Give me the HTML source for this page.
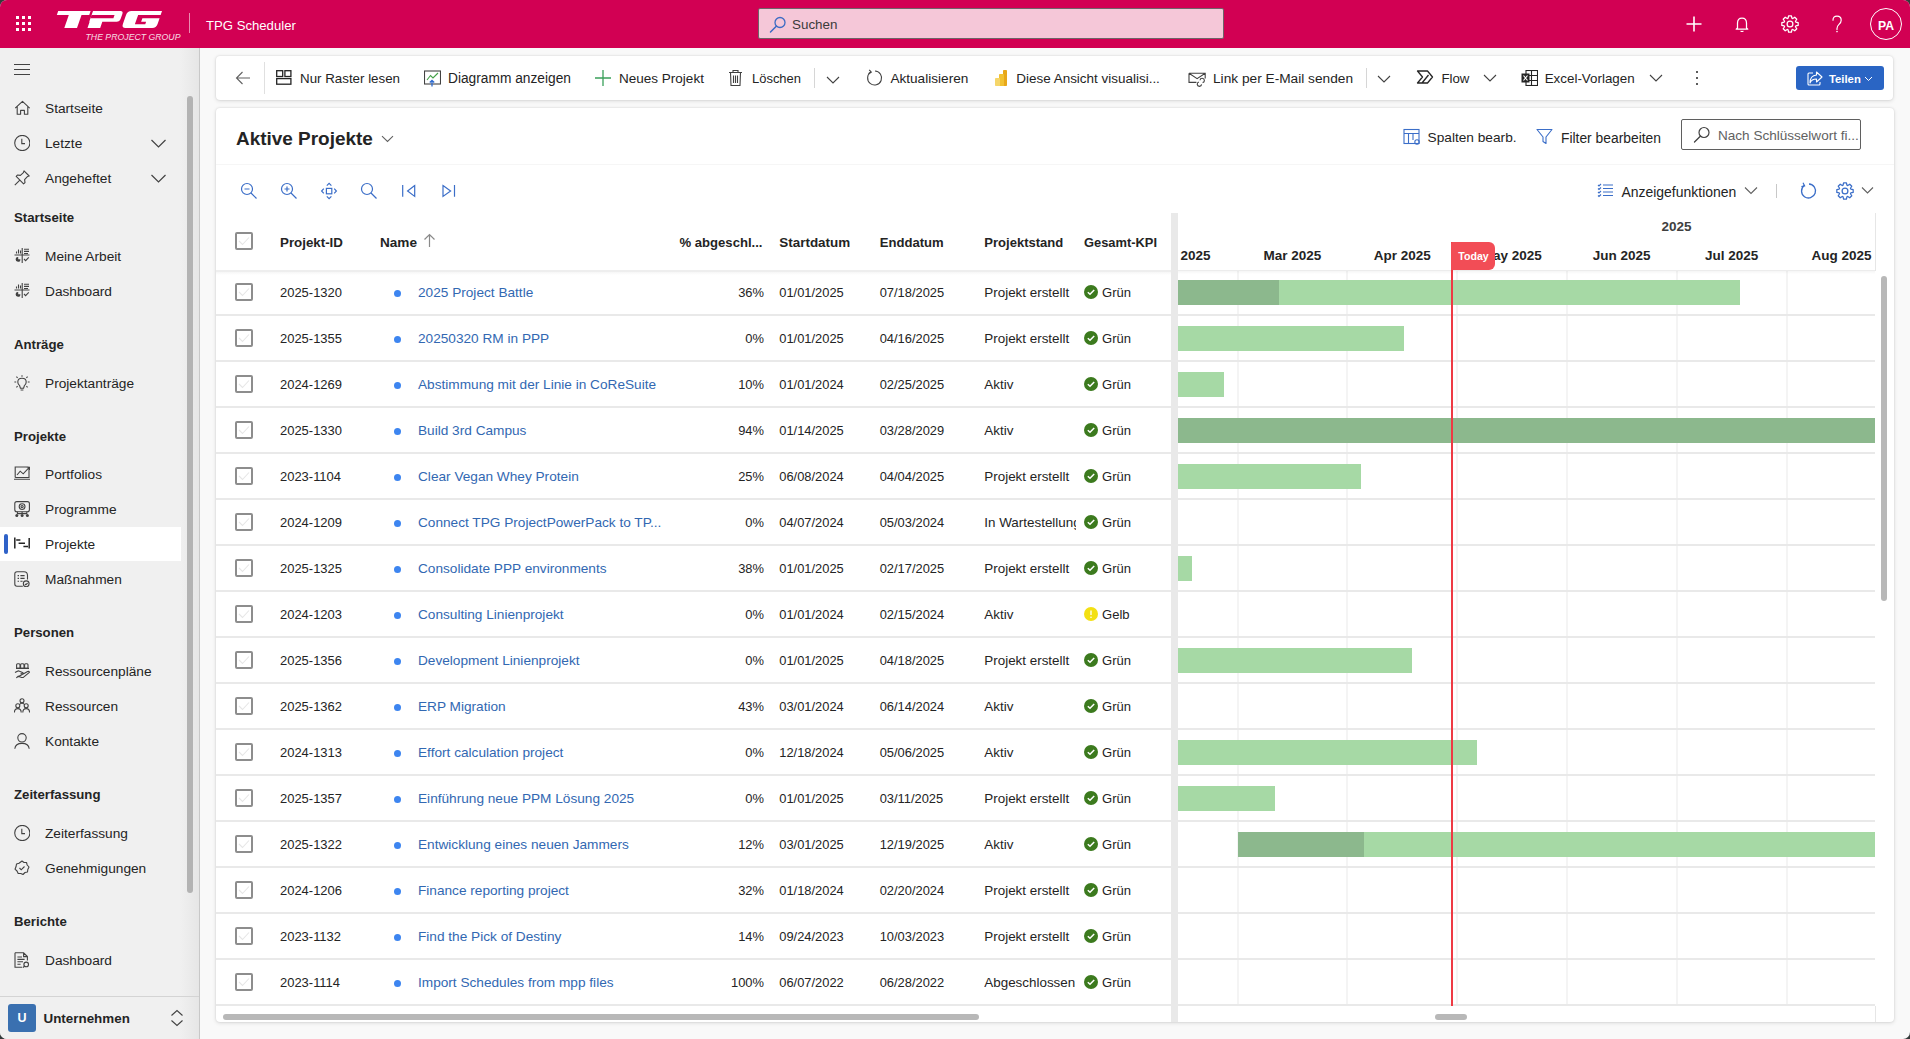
<!DOCTYPE html>
<html><head><meta charset="utf-8"><title>TPG Scheduler</title>
<style>
html,body{margin:0;padding:0;width:1910px;height:1039px;overflow:hidden;background:#343b3b}
#app{position:absolute;left:0;top:0;width:1910px;height:1039px;border-radius:7px;overflow:hidden;background:#f9f9f9;font-family:"Liberation Sans",sans-serif}
.a{position:absolute}
.t{position:absolute;white-space:nowrap;line-height:20px;font-family:"Liberation Sans",sans-serif}
.card{background:#fff;border-radius:4px;box-shadow:0 0 2px rgba(0,0,0,0.12),0 1px 4px rgba(0,0,0,0.12)}
</style></head><body><div id="app">
<div class="a" style="left:0;top:0;width:1910px;height:48px;background:#d20053"></div>
<div class="a" style="left:16px;top:16px;width:3px;height:3px;background:#fff"></div>
<div class="a" style="left:16px;top:22px;width:3px;height:3px;background:#fff"></div>
<div class="a" style="left:16px;top:28px;width:3px;height:3px;background:#fff"></div>
<div class="a" style="left:22px;top:16px;width:3px;height:3px;background:#fff"></div>
<div class="a" style="left:22px;top:22px;width:3px;height:3px;background:#fff"></div>
<div class="a" style="left:22px;top:28px;width:3px;height:3px;background:#fff"></div>
<div class="a" style="left:28px;top:16px;width:3px;height:3px;background:#fff"></div>
<div class="a" style="left:28px;top:22px;width:3px;height:3px;background:#fff"></div>
<div class="a" style="left:28px;top:28px;width:3px;height:3px;background:#fff"></div>
<svg class="a" style="left:0;top:0" width="200" height="48" viewBox="0 0 200 48">
<g fill="#fff" transform="translate(9.765,0) skewX(-19.29)">
<rect x="52.3" y="11" width="32.4" height="3.95"/>
<rect x="64.3" y="14" width="12.7" height="13.9"/>
<path d="M87.1 11 H114.5 Q117.5 11 117.5 14 V18.85 Q117.5 21.85 114.5 21.85 H100.2 V27.9 H87.5 V21.85 H87.1 Z"/>
<path d="M125.5 11 H156.1 V14.9 H133.6 V24.3 H144 V21.85 H139 V18.2 H156.2 V23.9 Q156.2 27.9 152.2 27.9 H125.5 Q121.5 27.9 121.5 23.9 V15 Q121.5 11 125.5 11 Z"/>
</g>
<g fill="#d20053" transform="translate(9.765,0) skewX(-19.29)">
<rect x="87" y="14.9" width="23" height="3.3"/>
</g>
<text x="85.5" y="39.6" font-family="Liberation Sans" font-size="8.6" font-style="italic" fill="#fff" opacity="0.85" textLength="95" lengthAdjust="spacingAndGlyphs">THE PROJECT GROUP</text>
<rect x="189" y="13" width="1" height="20" fill="#fff" opacity="0.55"/>
</svg>
<div class="t" style="left:206px;top:15.5px;font-size:13.15px;font-weight:400;color:#fff;">TPG Scheduler</div>
<div class="a" style="left:758px;top:8px;width:464px;height:29px;background:#f5c7d8;border:1px solid #6f6368;border-radius:2px"></div>
<svg class="a" style="left:769px;top:16px;color:#424242" width="18" height="18" viewBox="0 0 18 18" ><circle cx="11" cy="6.5" r="5" fill="none" stroke="#3c6bc4" stroke-width="1.3"/><path d="M7.3 10.2 L1.5 16" stroke="#3c6bc4" stroke-width="1.5" stroke-linecap="round"/></svg>
<div class="t" style="left:792px;top:15.0px;font-size:13.4px;font-weight:400;color:#3b3b3b;">Suchen</div>
<svg class="a" style="left:1685px;top:15px;color:#424242" width="18" height="18" viewBox="0 0 18 18" ><path d="M9 1.5 V16.5 M1.5 9 H16.5" stroke="#fff" stroke-width="1.6"/></svg>
<svg class="a" style="left:1735px;top:16px;color:#424242" width="14" height="17" viewBox="0 0 14 17" ><path d="M2.5 12 V7 Q2.5 2 7 2 Q11.5 2 11.5 7 V12 L12.8 13.2 H1.2 Z" fill="none" stroke="#fff" stroke-width="1.25" stroke-linejoin="round"/><path d="M5.6 14.8 Q7 16.2 8.4 14.8" fill="none" stroke="#fff" stroke-width="1.2"/></svg>
<svg class="a" style="left:1781px;top:15px;color:#424242" width="18" height="18" viewBox="0 0 18 18" ><polygon points="14.80,7.11 17.17,7.56 17.17,10.44 14.80,10.89 14.44,11.77 15.80,13.76 13.76,15.80 11.77,14.44 10.89,14.80 10.44,17.17 7.56,17.17 7.11,14.80 6.23,14.44 4.24,15.80 2.20,13.76 3.56,11.77 3.20,10.89 0.83,10.44 0.83,7.56 3.20,7.11 3.56,6.23 2.20,4.24 4.24,2.20 6.23,3.56 7.11,3.20 7.56,0.83 10.44,0.83 10.89,3.20 11.77,3.56 13.76,2.20 15.80,4.24 14.44,6.23" fill="none" stroke="#fff" stroke-width="1.25" stroke-linejoin="round"/><circle cx="9" cy="9" r="2.9" fill="none" stroke="#fff" stroke-width="1.25"/></svg>
<svg class="a" style="left:1831px;top:15px;color:#424242" width="13" height="18" viewBox="0 0 13 18" ><path d="M2 5.2 Q2 1.2 6 1.2 Q10.2 1.2 10.2 5.2 Q10.2 7.6 7.8 9.6 Q6 11.2 6 13.6 V14.4" stroke="#fff" fill="none" stroke-width="1.2" stroke-linecap="round"/><circle cx="6" cy="16.6" r="0.8" fill="#fff"/></svg>
<div class="a" style="left:1870px;top:8px;width:30px;height:30px;border:1px solid #fff;border-radius:50%"></div>
<div class="t" style="left:1686px;width:400px;text-align:center;top:16.0px;font-size:12.2px;font-weight:700;color:#fff;">PA</div>
<div class="a" style="left:0;top:48px;width:199px;height:991px;background:linear-gradient(to right,#f0f0f0 0,#f0f0f0 180px,#e6e6e6 199px)"></div>
<div class="a" style="left:199px;top:48px;width:1px;height:991px;background:#c8c8c8"></div>
<div class="a" style="left:14px;top:64px;width:16px;height:1px;background:#424242"></div>
<div class="a" style="left:14px;top:69px;width:16px;height:1px;background:#424242"></div>
<div class="a" style="left:14px;top:74px;width:16px;height:1px;background:#424242"></div>
<div class="a" style="left:0;top:527px;width:181px;height:34px;background:#fff"></div>
<div class="a" style="left:4px;top:534px;width:4px;height:20px;background:#2f62c8;border-radius:2px"></div>
<div class="a" style="left:187px;top:96px;width:6px;height:797px;background:#b3b3b3;border-radius:3px"></div>
<svg class="a" style="left:14px;top:100px;color:#424242" width="16" height="16" viewBox="0 0 16 16" ><path d="M1.2 8.2 L8.5 1.3 L15.8 8.2 M3.2 6.5 V14.2 H6.6 V10.4 H10.4 V14.2 H13.8 V6.5" stroke="#424242" fill="none" stroke-width="1.1" stroke-linejoin="round"/></svg>
<div class="t" style="left:45px;top:99.0px;font-size:13.7px;font-weight:400;color:#242424;">Startseite</div>
<svg class="a" style="left:14px;top:135px;color:#424242" width="16" height="16" viewBox="0 0 16 16" ><circle cx="8.3" cy="8" r="7.6" stroke="#424242" fill="none" stroke-width="1.1"/><path d="M7.8 3.8 V8.6 H11" stroke="#424242" fill="none" stroke-width="1.1" stroke-width="1.3"/></svg>
<div class="t" style="left:45px;top:134.0px;font-size:13.7px;font-weight:400;color:#242424;">Letzte</div>
<svg class="a" style="left:150px;top:137px;color:#424242" width="17" height="12" viewBox="0 0 17 12" ><path d="M1.5 3 L8.5 10 L15.5 3" stroke="#424242" fill="none" stroke-width="1.2"/></svg>
<svg class="a" style="left:14px;top:170px;color:#424242" width="16" height="16" viewBox="0 0 16 16" ><path d="M10 0.8 L15.2 6 L13.4 6.6 L10.6 9.6 L11 12.6 L9.6 13.8 L2.2 6.4 L3.4 5 L6.4 5.4 L9.4 2.6 Z M5.6 10.4 L0.8 15.2" stroke="#424242" fill="none" stroke-width="1.1" stroke-linejoin="round"/></svg>
<div class="t" style="left:45px;top:169.0px;font-size:13.7px;font-weight:400;color:#242424;">Angeheftet</div>
<svg class="a" style="left:150px;top:172px;color:#424242" width="17" height="12" viewBox="0 0 17 12" ><path d="M1.5 3 L8.5 10 L15.5 3" stroke="#424242" fill="none" stroke-width="1.2"/></svg>
<div class="t" style="left:14px;top:208.0px;font-size:13.2px;font-weight:700;color:#242424;">Startseite</div>
<svg class="a" style="left:14px;top:248px;color:#424242" width="16" height="16" viewBox="0 0 16 16" ><path d="M8.2 0 V15 M0.5 7 H15.5 M2.5 5.5 V3.5 M4.5 5.5 V1.5 M6.5 5.5 V2.5 M10 1.2 H15 M10 3.4 H15 M10 5.5 H14" stroke="#424242" fill="none" stroke-width="1.1"/><path d="M10 11 L11.6 12.6 L14.8 9.4" stroke="#424242" fill="none" stroke-width="1.1" stroke-width="1.3"/><path d="M4.2 9 A2.4 2.4 0 1 0 6.4 11.2 H4.2 Z" fill="#424242"/></svg>
<div class="t" style="left:45px;top:247.0px;font-size:13.7px;font-weight:400;color:#242424;">Meine Arbeit</div>
<svg class="a" style="left:14px;top:283px;color:#424242" width="16" height="16" viewBox="0 0 16 16" ><path d="M8.2 0 V15 M0.5 7 H15.5 M2.5 5.5 V3.5 M4.5 5.5 V1.5 M6.5 5.5 V2.5 M10 1.2 H15 M10 3.4 H15 M10 5.5 H14" stroke="#424242" fill="none" stroke-width="1.1"/><path d="M10 11 L11.6 12.6 L14.8 9.4" stroke="#424242" fill="none" stroke-width="1.1" stroke-width="1.3"/><path d="M4.2 9 A2.4 2.4 0 1 0 6.4 11.2 H4.2 Z" fill="#424242"/></svg>
<div class="t" style="left:45px;top:282.0px;font-size:13.7px;font-weight:400;color:#242424;">Dashboard</div>
<div class="t" style="left:14px;top:335.0px;font-size:13.2px;font-weight:700;color:#242424;">Anträge</div>
<svg class="a" style="left:14px;top:375px;color:#424242" width="16" height="16" viewBox="0 0 16 16" ><path d="M5.6 10.6 Q3.8 9.2 3.8 6.9 Q3.8 3.2 8 3.2 Q12.2 3.2 12.2 6.9 Q12.2 9.2 10.4 10.6 L9.6 13.2 H6.4 Z M6.6 15 H9.4 M8 0.2 V1.8 M0.4 7 H2.2 M13.8 7 H15.6 M2.4 1.6 L3.6 2.8 M13.6 1.6 L12.4 2.8 M2.4 12.4 L3.6 11.2 M13.6 12.4 L12.4 11.2" stroke="#424242" fill="none" stroke-width="1.1" stroke-width="1.2"/></svg>
<div class="t" style="left:45px;top:374.0px;font-size:13.7px;font-weight:400;color:#242424;">Projektanträge</div>
<div class="t" style="left:14px;top:427.0px;font-size:13.2px;font-weight:700;color:#242424;">Projekte</div>
<svg class="a" style="left:14px;top:466px;color:#424242" width="16" height="16" viewBox="0 0 16 16" ><path d="M1.2 11.5 V1 H14.5 M15 3 V11.5 H1.2 M-0.4 13.2 H16.6 M3 9 L6.2 5.2 L9.2 7.8 L15.5 1.2 M12.8 1.2 H15.6 V4" stroke="#424242" fill="none" stroke-width="1.1"/></svg>
<div class="t" style="left:45px;top:465.0px;font-size:13.7px;font-weight:400;color:#242424;">Portfolios</div>
<svg class="a" style="left:14px;top:501px;color:#424242" width="16" height="16" viewBox="0 0 16 16" ><rect x="0.8" y="0.6" width="14.6" height="10.2" rx="2" stroke="#424242" fill="none" stroke-width="1.1"/><circle cx="8.1" cy="5.6" r="2.9" stroke="#424242" fill="none" stroke-width="1.1"/><circle cx="8.1" cy="5.6" r="1.1" stroke="#424242" fill="none" stroke-width="1.1"/><path d="M3.4 10.8 V12.6 H12.8 V10.8 M8.1 10.8 V12.6" stroke="#424242" fill="none" stroke-width="1.1"/><circle cx="2.8" cy="14.4" r="1.5" fill="#424242"/><circle cx="8.1" cy="14.4" r="1.5" fill="#424242"/><circle cx="13.4" cy="14.4" r="1.5" fill="#424242"/></svg>
<div class="t" style="left:45px;top:500.0px;font-size:13.7px;font-weight:400;color:#242424;">Programme</div>
<svg class="a" style="left:14px;top:536px;color:#424242" width="16" height="16" viewBox="0 0 16 16" ><path d="M0.8 1.5 V12.5 M15.2 2 V12.5 M2.2 4 H6.4 M4.6 7.2 H11 M9.4 10.6 H14" stroke="#242424" fill="none" stroke-width="1.5"/></svg>
<div class="t" style="left:45px;top:535.0px;font-size:13.7px;font-weight:400;color:#242424;">Projekte</div>
<svg class="a" style="left:14px;top:571px;color:#424242" width="16" height="16" viewBox="0 0 16 16" ><path d="M10 0.8 H3 Q0.8 0.8 0.8 3 V13 Q0.8 15.2 3 15.2 H8.8 M10 0.8 Q13.5 0.8 13.5 4.5 V8.6 M3.6 4.6 H5 M6.4 4.6 H10.6 M3.6 7.4 H5 M6.4 7.4 H10.6 M3.6 10.2 H5 M6.4 10.2 H8.6" stroke="#424242" fill="none" stroke-width="1.1"/><circle cx="12.2" cy="12.8" r="2.9" stroke="#424242" fill="none" stroke-width="1.1"/><path d="M10.9 12.8 L11.9 13.8 L13.6 12" stroke="#424242" fill="none" stroke-width="1.1" stroke-width="1"/></svg>
<div class="t" style="left:45px;top:570.0px;font-size:13.7px;font-weight:400;color:#242424;">Maßnahmen</div>
<div class="t" style="left:14px;top:623.0px;font-size:13.2px;font-weight:700;color:#242424;">Personen</div>
<svg class="a" style="left:14px;top:663px;color:#424242" width="16" height="16" viewBox="0 0 16 16" ><rect x="2.6" y="0.8" width="3.4" height="4.6" rx="1" stroke="#424242" fill="none" stroke-width="1.1"/><rect x="6.6" y="0.8" width="3.4" height="4.6" rx="1" stroke="#424242" fill="none" stroke-width="1.1"/><rect x="10.6" y="0.8" width="3.4" height="4.6" rx="1" stroke="#424242" fill="none" stroke-width="1.1"/><path d="M2 5.4 H15 M1 9.6 L3.4 8.2 Q4.4 7.6 5.6 8.2 L8.4 9.4 Q9.8 10 9.2 11 L6.6 10.6 M9.2 11 L13.6 8.6 Q15.4 7.8 15.4 9.4 L9.6 14.2 Q8.8 14.8 7.6 14.4 L4.2 13.2 L2.6 14.6 Z" stroke="#424242" fill="none" stroke-width="1.1" stroke-linejoin="round"/></svg>
<div class="t" style="left:45px;top:662.0px;font-size:13.7px;font-weight:400;color:#242424;">Ressourcenpläne</div>
<svg class="a" style="left:14px;top:698px;color:#424242" width="16" height="16" viewBox="0 0 16 16" ><circle cx="8" cy="2.8" r="2" stroke="#424242" fill="none" stroke-width="1.1"/><circle cx="3.8" cy="7.8" r="2" stroke="#424242" fill="none" stroke-width="1.1"/><circle cx="12.2" cy="7.8" r="2" stroke="#424242" fill="none" stroke-width="1.1"/><path d="M0.4 14.6 Q0.4 10.6 3.8 10.6 Q7.2 10.6 7.2 14.6 M8.8 14.6 Q8.8 10.6 12.2 10.6 Q15.6 10.6 15.6 14.6 M5.6 6.6 Q6 5.2 8 5.2 Q10 5.2 10.4 6.6" stroke="#424242" fill="none" stroke-width="1.1"/></svg>
<div class="t" style="left:45px;top:697.0px;font-size:13.7px;font-weight:400;color:#242424;">Ressourcen</div>
<svg class="a" style="left:14px;top:733px;color:#424242" width="16" height="16" viewBox="0 0 16 16" ><circle cx="8" cy="4.8" r="4.2" stroke="#424242" fill="none" stroke-width="1.1"/><path d="M0.8 15.8 Q1.4 10.4 8 10.4 Q14.6 10.4 15.2 15.8" stroke="#424242" fill="none" stroke-width="1.1"/></svg>
<div class="t" style="left:45px;top:732.0px;font-size:13.7px;font-weight:400;color:#242424;">Kontakte</div>
<div class="t" style="left:14px;top:785.0px;font-size:13.2px;font-weight:700;color:#242424;">Zeiterfassung</div>
<svg class="a" style="left:14px;top:825px;color:#424242" width="16" height="16" viewBox="0 0 16 16" ><circle cx="8.3" cy="8" r="7.6" stroke="#424242" fill="none" stroke-width="1.1"/><path d="M7.8 3.8 V8.6 H11" stroke="#424242" fill="none" stroke-width="1.1" stroke-width="1.3"/></svg>
<div class="t" style="left:45px;top:824.0px;font-size:13.7px;font-weight:400;color:#242424;">Zeiterfassung</div>
<svg class="a" style="left:14px;top:860px;color:#424242" width="16" height="16" viewBox="0 0 16 16" ><path d="M8 1 L10 2.5 L12.5 2.5 L13.2 5 L15 7 L13.8 9.5 L13.5 12 L11 12.5 L9 14.5 L6.8 13.5 L4.2 13.5 L3 11 L1 9.2 L2 6.8 L2.5 4 L5 3.2 Z" stroke="#424242" fill="none" stroke-width="1.1" stroke-linejoin="round"/><path d="M5.5 8 L7.2 9.8 L10.5 6.5" stroke="#424242" fill="none" stroke-width="1.1"/></svg>
<div class="t" style="left:45px;top:859.0px;font-size:13.7px;font-weight:400;color:#242424;">Genehmigungen</div>
<div class="t" style="left:14px;top:912.0px;font-size:13.2px;font-weight:700;color:#242424;">Berichte</div>
<svg class="a" style="left:14px;top:952px;color:#424242" width="16" height="16" viewBox="0 0 16 16" ><path d="M1 0.8 H9.6 L13.4 4.6 V8.6 M9.6 0.8 V4.6 H13.4 M1 0.8 V15.2 H8.2 M3.4 5 H8 M3.4 7.4 H10.6 M3.4 9.8 H9 M3.4 12.2 H6.6" stroke="#424242" fill="none" stroke-width="1.1"/><circle cx="12.2" cy="12.4" r="2.3" stroke="#424242" fill="none" stroke-width="1.1"/><path d="M10.6 14 L9 15.6" stroke="#424242" fill="none" stroke-width="1.1"/></svg>
<div class="t" style="left:45px;top:951.0px;font-size:13.7px;font-weight:400;color:#242424;">Dashboard</div>
<div class="a" style="left:0;top:996px;width:199px;height:1px;background:#d4d4d4"></div>
<div class="a" style="left:8px;top:1004px;width:28px;height:28px;background:#3a70b0;border-radius:3px"></div>
<div class="t" style="left:-178px;width:400px;text-align:center;top:1008.0px;font-size:12.5px;font-weight:700;color:#fff;">U</div>
<div class="t" style="left:43.5px;top:1009.0px;font-size:13.4px;font-weight:700;color:#242424;">Unternehmen</div>
<svg class="a" style="left:170px;top:1009px;color:#424242" width="14" height="18" viewBox="0 0 14 18" ><path d="M1.5 6.5 L7 1.5 L12.5 6.5 M1.5 11.5 L7 16.5 L12.5 11.5" stroke="#424242" fill="none" stroke-width="1.1"/></svg>
<div class="a card" style="left:216px;top:56px;width:1677px;height:44px"></div>
<svg class="a" style="left:235px;top:70px;color:#424242" width="16" height="16" viewBox="0 0 16 16" ><path d="M15 8 H1.5 M7.5 2 L1.5 8 L7.5 14" stroke="#616161" fill="none" stroke-width="1.1"/></svg>
<div class="a" style="left:264px;top:62px;width:1px;height:32px;background:#e0e0e0"></div>
<svg class="a" style="left:276px;top:70px;color:#424242" width="16" height="16" viewBox="0 0 16 16" ><rect x="0.7" y="0.7" width="6" height="5.8" stroke="#242424" fill="none" stroke-width="1.3"/><rect x="8.9" y="0.7" width="6" height="5.8" stroke="#242424" fill="none" stroke-width="1.3"/><rect x="0.7" y="8.6" width="14.2" height="5.6" stroke="#242424" fill="none" stroke-width="1.3"/></svg>
<div class="t" style="left:300px;top:69.0px;font-size:13.33px;font-weight:400;color:#242424;">Nur Raster lesen</div>
<svg class="a" style="left:424px;top:70px;color:#424242" width="17" height="17" viewBox="0 0 17 17" ><rect x="0.5" y="1" width="16" height="13" stroke="#424242" fill="none" stroke-width="1.1"/><path d="M3 10 L6.5 5.5 L9 8 L14 3" stroke="#43a047" fill="none" stroke-width="1.1"/><path d="M8 16.5 V10.5 M5.8 12.5 L8 10.3 L10.2 12.5" stroke="#2f6bd0" fill="none" stroke-width="1.3"/></svg>
<div class="t" style="left:448px;top:69.0px;font-size:13.74px;font-weight:400;color:#242424;">Diagramm anzeigen</div>
<svg class="a" style="left:594px;top:69px;color:#424242" width="18" height="18" viewBox="0 0 18 18" ><path d="M9 1 V17 M1 9 H17" stroke="#3aa05a" stroke-width="1.3"/></svg>
<div class="t" style="left:619px;top:69.0px;font-size:13.53px;font-weight:400;color:#242424;">Neues Projekt</div>
<svg class="a" style="left:728px;top:69px;color:#424242" width="15" height="18" viewBox="0 0 15 18" ><path d="M1 3.5 H14 M5 3.5 V1.5 H10 V3.5 M2.5 3.5 L3 16.5 H12 L12.5 3.5 M5.5 6.5 V14 M7.5 6.5 V14 M9.5 6.5 V14" stroke="#424242" fill="none" stroke-width="1.1"/></svg>
<div class="t" style="left:752px;top:69.0px;font-size:12.96px;font-weight:400;color:#242424;">Löschen</div>
<div class="a" style="left:814px;top:68px;width:1px;height:20px;background:#d6d6d6"></div>
<svg class="a" style="left:826px;top:76px;color:#424242" width="14" height="8" viewBox="0 0 14 8" ><path d="M1 1 L7 7 L13 1" stroke="#424242" fill="none" stroke-width="1.1"/></svg>
<svg class="a" style="left:866px;top:69px;color:#424242" width="18" height="18" viewBox="0 0 18 18" ><path d="M5 3 A7 7 0 1 0 9 2" stroke="#424242" fill="none" stroke-width="1.1"/><path d="M3.2 0.8 L5.3 3.2 L2.6 4.6" stroke="#424242" fill="none" stroke-width="1.1"/></svg>
<div class="t" style="left:890.4px;top:69.0px;font-size:13.62px;font-weight:400;color:#242424;">Aktualisieren</div>
<svg class="a" style="left:994px;top:70px;color:#424242" width="14" height="17" viewBox="0 0 14 17" ><rect x="9" y="0" width="4" height="16" rx="0.8" fill="#e8a81a"/><rect x="5" y="4" width="5" height="12" rx="0.8" fill="#f2c233"/><rect x="1" y="8" width="5" height="8" rx="0.8" fill="#f5d66a"/></svg>
<div class="t" style="left:1016.3px;top:69.0px;font-size:13.46px;font-weight:400;color:#242424;">Diese Ansicht visualisi...</div>
<svg class="a" style="left:1188px;top:70px;color:#424242" width="19" height="17" viewBox="0 0 19 17" ><path d="M1 3.2 H17.2 V8.6 M1 3.2 V12.4 H8.4 M1 3.2 L9.1 8.6 L17.2 3.2" stroke="#424242" fill="none" stroke-width="1.1"/><path d="M12 10.2 A2.2 2.2 0 1 1 14.6 12.6 M13.6 14.4 A2.2 2.2 0 1 1 11 12" stroke="#424242" fill="none" stroke-width="1.1"/></svg>
<div class="t" style="left:1213px;top:69.0px;font-size:13.69px;font-weight:400;color:#242424;">Link per E-Mail senden</div>
<div class="a" style="left:1366px;top:68px;width:1px;height:20px;background:#d6d6d6"></div>
<svg class="a" style="left:1377px;top:74.5px;color:#424242" width="14" height="8" viewBox="0 0 14 8" ><path d="M1 1 L7 7 L13 1" stroke="#424242" fill="none" stroke-width="1.1"/></svg>
<svg class="a" style="left:1416px;top:70px;color:#424242" width="18" height="15" viewBox="0 0 18 15" ><path d="M1.5 1 H11.5 L16.5 7 L11.5 13 H1.5 L6.5 7 Z M6 13 L12.5 5" stroke="#242424" fill="none" stroke-width="1.3" stroke-linejoin="round"/></svg>
<div class="t" style="left:1441.4px;top:69.0px;font-size:13.26px;font-weight:400;color:#242424;">Flow</div>
<svg class="a" style="left:1483px;top:74.2px;color:#424242" width="14" height="8" viewBox="0 0 14 8" ><path d="M1 1 L7 7 L13 1" stroke="#424242" fill="none" stroke-width="1.1"/></svg>
<svg class="a" style="left:1521px;top:70px;color:#424242" width="17" height="16" viewBox="0 0 17 16" ><rect x="5" y="0.5" width="11.5" height="15" stroke="#242424" fill="none" stroke-width="1.1"/><path d="M5 5.5 H16.5 M5 10.5 H16.5 M10.5 0.5 V15.5" stroke="#242424" stroke-width="1.1"/><rect x="0.5" y="3.5" width="8" height="9" fill="#242424"/><path d="M2.5 5.5 L6.5 10.5 M6.5 5.5 L2.5 10.5" stroke="#fff" stroke-width="1.2"/></svg>
<div class="t" style="left:1544.7px;top:69.0px;font-size:13.38px;font-weight:400;color:#242424;">Excel-Vorlagen</div>
<svg class="a" style="left:1649px;top:74.2px;color:#424242" width="14" height="8" viewBox="0 0 14 8" ><path d="M1 1 L7 7 L13 1" stroke="#424242" fill="none" stroke-width="1.1"/></svg>
<div class="a" style="left:1696px;top:71px;width:2px;height:2px;background:#242424;border-radius:1px"></div>
<div class="a" style="left:1696px;top:77px;width:2px;height:2px;background:#242424;border-radius:1px"></div>
<div class="a" style="left:1696px;top:83px;width:2px;height:2px;background:#242424;border-radius:1px"></div>
<div class="a" style="left:1796px;top:66px;width:88px;height:24px;background:#2a65c4;border-radius:3px"></div>
<svg class="a" style="left:1807px;top:71px;color:#424242" width="16" height="15" viewBox="0 0 16 15" ><path d="M9.5 1 L15 6 L9.5 11 V8 Q4.5 8 3 12 Q3 4.5 9.5 4 Z" stroke="#fff" fill="none" stroke-width="1.1" stroke-linejoin="round"/><path d="M6 2 H2 Q1 2 1 3 V13 Q1 14 2 14 H12 Q13 14 13 13 V11" stroke="#fff" fill="none" stroke-width="1.1"/></svg>
<div class="t" style="left:1829px;top:69.0px;font-size:11.3px;font-weight:700;color:#fff;">Teilen</div>
<svg class="a" style="left:1864px;top:76px;color:#424242" width="9" height="6" viewBox="0 0 9 6" ><path d="M1 1 L4.5 4.5 L8 1" stroke="#fff" fill="none" stroke-width="1"/></svg>
<div class="a card" style="left:216px;top:108px;width:1678px;height:914px"></div>
<div class="t" style="left:236px;top:129.0px;font-size:18.96px;font-weight:700;color:#242424;line-height:20px">Aktive Projekte</div>
<svg class="a" style="left:381px;top:135px;color:#424242" width="13" height="8" viewBox="0 0 13 8" ><path d="M1 1.2 L6.5 6.4 L12 1.2" stroke="#616161" fill="none" stroke-width="1.1"/></svg>
<div class="a" style="left:216px;top:164px;width:1678px;height:1px;background:#f6f6f6"></div>
<svg class="a" style="left:1403px;top:128px;color:#424242" width="18" height="18" viewBox="0 0 18 18" ><rect x="1" y="1.5" width="15" height="14" stroke="#3b6ec8" fill="none" stroke-width="1.1"/><path d="M1 5.5 H16 M5.5 5.5 V15.5 M10 5.5 V12" stroke="#3b6ec8" fill="none" stroke-width="1.1"/><circle cx="14" cy="14" r="2.2" stroke="#3b6ec8" fill="none" stroke-width="1.1"/></svg>
<div class="t" style="left:1427.6px;top:128.0px;font-size:13.68px;font-weight:400;color:#242424;">Spalten bearb.</div>
<svg class="a" style="left:1536px;top:128px;color:#424242" width="17" height="17" viewBox="0 0 17 17" ><path d="M1 1.5 H16 L10 9 V15.5 L7 13.5 V9 Z" stroke="#3b6ec8" fill="none" stroke-width="1.1" stroke-linejoin="round"/></svg>
<div class="t" style="left:1561px;top:128.0px;font-size:13.84px;font-weight:400;color:#242424;">Filter bearbeiten</div>
<div class="a" style="left:1681px;top:119px;width:178px;height:29px;border:1px solid #5f5f5f;border-radius:2px;background:#fff"></div>
<svg class="a" style="left:1693px;top:126px;color:#424242" width="18" height="18" viewBox="0 0 18 18" ><circle cx="11" cy="6.5" r="5" fill="none" stroke="#424242" stroke-width="1.2"/><path d="M7.3 10.2 L1.5 16" stroke="#424242" stroke-width="1.3" stroke-linecap="round"/></svg>
<div class="t" style="left:1718px;top:126.0px;font-size:13.55px;font-weight:400;color:#616161;">Nach Schlüsselwort fi...</div>
<svg class="a" style="left:240px;top:182px;color:#424242" width="18" height="18" viewBox="0 0 18 18" ><circle cx="7" cy="7" r="5.5" stroke="#3b6ec8" fill="none" stroke-width="1.2"/><path d="M11 11 L16.5 16.5 M4.5 7 H9.5" stroke="#3b6ec8" fill="none" stroke-width="1.2"/></svg>
<svg class="a" style="left:280px;top:182px;color:#424242" width="18" height="18" viewBox="0 0 18 18" ><circle cx="7" cy="7" r="5.5" stroke="#3b6ec8" fill="none" stroke-width="1.2"/><path d="M11 11 L16.5 16.5 M4.5 7 H9.5 M7 4.5 V9.5" stroke="#3b6ec8" fill="none" stroke-width="1.2"/></svg>
<svg class="a" style="left:320px;top:182px;color:#424242" width="18" height="18" viewBox="0 0 18 18" ><rect x="6.4" y="6.4" width="5.4" height="5.4" stroke="#3b6ec8" fill="none" stroke-width="1.2"/><path d="M3.8 6.6 L1.6 9 L3.8 11.4 M14.2 6.6 L16.4 9 L14.2 11.4 M6.8 3.6 L9.1 1.4 L11.4 3.6 M6.8 14.4 L9.1 16.6 L11.4 14.4" stroke="#3b6ec8" fill="none" stroke-width="1.2"/></svg>
<svg class="a" style="left:360px;top:182px;color:#424242" width="18" height="18" viewBox="0 0 18 18" ><circle cx="7" cy="7" r="5.5" stroke="#3b6ec8" fill="none" stroke-width="1.2"/><path d="M11 11 L16.5 16.5" stroke="#3b6ec8" fill="none" stroke-width="1.2"/></svg>
<svg class="a" style="left:401px;top:183px;color:#424242" width="16" height="16" viewBox="0 0 16 16" ><path d="M1.7 2 V13.8 M13.7 2.6 L6.6 8 L13.7 13.4 Z" stroke="#3b6ec8" fill="none" stroke-width="1.2" stroke-width="1.3"/></svg>
<svg class="a" style="left:441px;top:183px;color:#424242" width="16" height="16" viewBox="0 0 16 16" ><path d="M13.5 2 V13.8 M2 2.6 L9.6 8 L2 13.4 Z" stroke="#3b6ec8" fill="none" stroke-width="1.2" stroke-width="1.3"/></svg>
<svg class="a" style="left:1597px;top:183px;color:#424242" width="17" height="15" viewBox="0 0 17 15" ><path d="M6 2 H16 M6 5.5 H16 M6 9 H16 M6 12.5 H16 M1 2 L2 3 L4 1 M1 5.5 L2 6.5 L4 4.5 M1 9 L2 10 L4 8 M1 12.5 L2 13.5 L4 11.5" stroke="#3b6ec8" fill="none" stroke-width="1.1"/></svg>
<div class="t" style="left:1621.4px;top:182.0px;font-size:13.98px;font-weight:400;color:#242424;">Anzeigefunktionen</div>
<svg class="a" style="left:1744px;top:186px;color:#424242" width="14" height="9" viewBox="0 0 14 9" ><path d="M1 1.5 L7 7.5 L13 1.5" stroke="#616161" fill="none" stroke-width="1.1"/></svg>
<div class="a" style="left:1776px;top:184px;width:1px;height:14px;background:#c8c8c8"></div>
<svg class="a" style="left:1800px;top:182px;color:#424242" width="18" height="18" viewBox="0 0 18 18" ><path d="M4.2 3.5 A7 7 0 1 0 9 2" stroke="#3b6ec8" fill="none" stroke-width="1.3"/><path d="M3 0.8 L4.6 3.8 L1.4 4.6" stroke="#3b6ec8" fill="none" stroke-width="1.2"/></svg>
<svg class="a" style="left:1836px;top:182px;color:#424242" width="18" height="18" viewBox="0 0 18 18" ><polygon points="14.80,7.11 17.17,7.56 17.17,10.44 14.80,10.89 14.44,11.77 15.80,13.76 13.76,15.80 11.77,14.44 10.89,14.80 10.44,17.17 7.56,17.17 7.11,14.80 6.23,14.44 4.24,15.80 2.20,13.76 3.56,11.77 3.20,10.89 0.83,10.44 0.83,7.56 3.20,7.11 3.56,6.23 2.20,4.24 4.24,2.20 6.23,3.56 7.11,3.20 7.56,0.83 10.44,0.83 10.89,3.20 11.77,3.56 13.76,2.20 15.80,4.24 14.44,6.23" fill="none" stroke="#3b6ec8" stroke-width="1.25" stroke-linejoin="round"/><circle cx="9" cy="9" r="2.9" fill="none" stroke="#3b6ec8" stroke-width="1.25"/></svg>
<svg class="a" style="left:1861px;top:186px;color:#424242" width="13" height="9" viewBox="0 0 13 9" ><path d="M1 1.5 L6.5 7 L12 1.5" stroke="#616161" fill="none" stroke-width="1.1"/></svg>
<div class="a" style="left:235px;top:232px;width:14px;height:14px;border:2px solid #8d8d8d;border-radius:2px;background:#fff"></div><svg class="a" style="left:238px;top:236px" width="12" height="10" viewBox="0 0 12 10"><path d="M1 5 L4.5 8.5 L11 1.5" stroke="#e6e6e6" fill="none" stroke-width="1.1"/></svg>
<div class="t" style="left:280px;top:233.0px;font-size:13.34px;font-weight:700;color:#242424;">Projekt-ID</div>
<div class="t" style="left:380px;top:233.0px;font-size:13.58px;font-weight:700;color:#242424;">Name</div>
<svg class="a" style="left:423px;top:233px;color:#424242" width="13" height="15" viewBox="0 0 13 15" ><path d="M6.5 14 V1.5 M1.5 6.5 L6.5 1.5 L11.5 6.5" stroke="#8a8a8a" fill="none" stroke-width="1.2"/></svg>
<div class="t" style="right:1147.5px;top:233.0px;font-size:13.1px;font-weight:700;color:#242424;">% abgeschl...</div>
<div class="t" style="left:779.3px;top:233.0px;font-size:13.45px;font-weight:700;color:#242424;">Startdatum</div>
<div class="t" style="left:879.7px;top:233.0px;font-size:13.09px;font-weight:700;color:#242424;">Enddatum</div>
<div class="t" style="left:984.3px;top:233.0px;font-size:13.04px;font-weight:700;color:#242424;">Projektstand</div>
<div class="t" style="left:1084px;top:233.0px;font-size:12.88px;font-weight:700;color:#242424;">Gesamt-KPI</div>
<div class="a" style="left:216px;top:270px;width:955px;height:2px;background:#eeeeee"></div>
<div class="a" style="left:216px;top:272px;width:955px;height:3px;background:linear-gradient(#f6f6f6,#fff)"></div>
<div class="a" style="left:235px;top:283px;width:14px;height:14px;border:2px solid #8d8d8d;border-radius:2px;background:#fff"></div><svg class="a" style="left:238px;top:287px" width="12" height="10" viewBox="0 0 12 10"><path d="M1 5 L4.5 8.5 L11 1.5" stroke="#e6e6e6" fill="none" stroke-width="1.1"/></svg>
<div class="t" style="left:280px;top:283.0px;font-size:12.96px;font-weight:400;color:#242424;">2025-1320</div>
<div class="a" style="left:394px;top:289.5px;width:7px;height:7px;border-radius:50%;background:#3d85f0"></div>
<div class="t" style="left:418px;top:283.0px;font-size:13.65px;font-weight:400;color:#3268b2;">2025 Project Battle</div>
<div class="t" style="right:1146px;top:283.0px;font-size:12.9px;font-weight:400;color:#242424;">36%</div>
<div class="t" style="left:779.3px;top:283.0px;font-size:12.89px;font-weight:400;color:#242424;">01/01/2025</div>
<div class="t" style="left:879.7px;top:283.0px;font-size:12.89px;font-weight:400;color:#242424;">07/18/2025</div>
<div class="t" style="left:984.3px;top:283.0px;font-size:13.42px;font-weight:400;color:#242424;width:92px;overflow:hidden">Projekt erstellt</div>
<svg class="a" style="left:1084px;top:285px" width="14" height="14" viewBox="0 0 14 14"><circle cx="7" cy="7" r="7" fill="#3c7a1e"/><path d="M3.8 7.2 L6 9.3 L10.2 4.9" stroke="#fff" fill="none" stroke-width="1.5"/></svg>
<div class="t" style="left:1102px;top:283.0px;font-size:13.04px;font-weight:400;color:#242424;">Grün</div>
<div class="a" style="left:216px;top:314px;width:955px;height:2px;background:#e9e9e9"></div>
<div class="a" style="left:235px;top:329px;width:14px;height:14px;border:2px solid #8d8d8d;border-radius:2px;background:#fff"></div><svg class="a" style="left:238px;top:333px" width="12" height="10" viewBox="0 0 12 10"><path d="M1 5 L4.5 8.5 L11 1.5" stroke="#e6e6e6" fill="none" stroke-width="1.1"/></svg>
<div class="t" style="left:280px;top:329.0px;font-size:12.96px;font-weight:400;color:#242424;">2025-1355</div>
<div class="a" style="left:394px;top:335.5px;width:7px;height:7px;border-radius:50%;background:#3d85f0"></div>
<div class="t" style="left:418px;top:329.0px;font-size:13.65px;font-weight:400;color:#3268b2;">20250320 RM in PPP</div>
<div class="t" style="right:1146px;top:329.0px;font-size:12.9px;font-weight:400;color:#242424;">0%</div>
<div class="t" style="left:779.3px;top:329.0px;font-size:12.89px;font-weight:400;color:#242424;">01/01/2025</div>
<div class="t" style="left:879.7px;top:329.0px;font-size:12.89px;font-weight:400;color:#242424;">04/16/2025</div>
<div class="t" style="left:984.3px;top:329.0px;font-size:13.42px;font-weight:400;color:#242424;width:92px;overflow:hidden">Projekt erstellt</div>
<svg class="a" style="left:1084px;top:331px" width="14" height="14" viewBox="0 0 14 14"><circle cx="7" cy="7" r="7" fill="#3c7a1e"/><path d="M3.8 7.2 L6 9.3 L10.2 4.9" stroke="#fff" fill="none" stroke-width="1.5"/></svg>
<div class="t" style="left:1102px;top:329.0px;font-size:13.04px;font-weight:400;color:#242424;">Grün</div>
<div class="a" style="left:216px;top:360px;width:955px;height:2px;background:#e9e9e9"></div>
<div class="a" style="left:235px;top:375px;width:14px;height:14px;border:2px solid #8d8d8d;border-radius:2px;background:#fff"></div><svg class="a" style="left:238px;top:379px" width="12" height="10" viewBox="0 0 12 10"><path d="M1 5 L4.5 8.5 L11 1.5" stroke="#e6e6e6" fill="none" stroke-width="1.1"/></svg>
<div class="t" style="left:280px;top:375.0px;font-size:12.96px;font-weight:400;color:#242424;">2024-1269</div>
<div class="a" style="left:394px;top:381.5px;width:7px;height:7px;border-radius:50%;background:#3d85f0"></div>
<div class="t" style="left:418px;top:375.0px;font-size:13.65px;font-weight:400;color:#3268b2;">Abstimmung mit der Linie in CoReSuite</div>
<div class="t" style="right:1146px;top:375.0px;font-size:12.9px;font-weight:400;color:#242424;">10%</div>
<div class="t" style="left:779.3px;top:375.0px;font-size:12.89px;font-weight:400;color:#242424;">01/01/2024</div>
<div class="t" style="left:879.7px;top:375.0px;font-size:12.89px;font-weight:400;color:#242424;">02/25/2025</div>
<div class="t" style="left:984.3px;top:375.0px;font-size:13.42px;font-weight:400;color:#242424;width:92px;overflow:hidden">Aktiv</div>
<svg class="a" style="left:1084px;top:377px" width="14" height="14" viewBox="0 0 14 14"><circle cx="7" cy="7" r="7" fill="#3c7a1e"/><path d="M3.8 7.2 L6 9.3 L10.2 4.9" stroke="#fff" fill="none" stroke-width="1.5"/></svg>
<div class="t" style="left:1102px;top:375.0px;font-size:13.04px;font-weight:400;color:#242424;">Grün</div>
<div class="a" style="left:216px;top:406px;width:955px;height:2px;background:#e9e9e9"></div>
<div class="a" style="left:235px;top:421px;width:14px;height:14px;border:2px solid #8d8d8d;border-radius:2px;background:#fff"></div><svg class="a" style="left:238px;top:425px" width="12" height="10" viewBox="0 0 12 10"><path d="M1 5 L4.5 8.5 L11 1.5" stroke="#e6e6e6" fill="none" stroke-width="1.1"/></svg>
<div class="t" style="left:280px;top:421.0px;font-size:12.96px;font-weight:400;color:#242424;">2025-1330</div>
<div class="a" style="left:394px;top:427.5px;width:7px;height:7px;border-radius:50%;background:#3d85f0"></div>
<div class="t" style="left:418px;top:421.0px;font-size:13.65px;font-weight:400;color:#3268b2;">Build 3rd Campus</div>
<div class="t" style="right:1146px;top:421.0px;font-size:12.9px;font-weight:400;color:#242424;">94%</div>
<div class="t" style="left:779.3px;top:421.0px;font-size:12.89px;font-weight:400;color:#242424;">01/14/2025</div>
<div class="t" style="left:879.7px;top:421.0px;font-size:12.89px;font-weight:400;color:#242424;">03/28/2029</div>
<div class="t" style="left:984.3px;top:421.0px;font-size:13.42px;font-weight:400;color:#242424;width:92px;overflow:hidden">Aktiv</div>
<svg class="a" style="left:1084px;top:423px" width="14" height="14" viewBox="0 0 14 14"><circle cx="7" cy="7" r="7" fill="#3c7a1e"/><path d="M3.8 7.2 L6 9.3 L10.2 4.9" stroke="#fff" fill="none" stroke-width="1.5"/></svg>
<div class="t" style="left:1102px;top:421.0px;font-size:13.04px;font-weight:400;color:#242424;">Grün</div>
<div class="a" style="left:216px;top:452px;width:955px;height:2px;background:#e9e9e9"></div>
<div class="a" style="left:235px;top:467px;width:14px;height:14px;border:2px solid #8d8d8d;border-radius:2px;background:#fff"></div><svg class="a" style="left:238px;top:471px" width="12" height="10" viewBox="0 0 12 10"><path d="M1 5 L4.5 8.5 L11 1.5" stroke="#e6e6e6" fill="none" stroke-width="1.1"/></svg>
<div class="t" style="left:280px;top:467.0px;font-size:12.96px;font-weight:400;color:#242424;">2023-1104</div>
<div class="a" style="left:394px;top:473.5px;width:7px;height:7px;border-radius:50%;background:#3d85f0"></div>
<div class="t" style="left:418px;top:467.0px;font-size:13.65px;font-weight:400;color:#3268b2;">Clear Vegan Whey Protein</div>
<div class="t" style="right:1146px;top:467.0px;font-size:12.9px;font-weight:400;color:#242424;">25%</div>
<div class="t" style="left:779.3px;top:467.0px;font-size:12.89px;font-weight:400;color:#242424;">06/08/2024</div>
<div class="t" style="left:879.7px;top:467.0px;font-size:12.89px;font-weight:400;color:#242424;">04/04/2025</div>
<div class="t" style="left:984.3px;top:467.0px;font-size:13.42px;font-weight:400;color:#242424;width:92px;overflow:hidden">Projekt erstellt</div>
<svg class="a" style="left:1084px;top:469px" width="14" height="14" viewBox="0 0 14 14"><circle cx="7" cy="7" r="7" fill="#3c7a1e"/><path d="M3.8 7.2 L6 9.3 L10.2 4.9" stroke="#fff" fill="none" stroke-width="1.5"/></svg>
<div class="t" style="left:1102px;top:467.0px;font-size:13.04px;font-weight:400;color:#242424;">Grün</div>
<div class="a" style="left:216px;top:498px;width:955px;height:2px;background:#e9e9e9"></div>
<div class="a" style="left:235px;top:513px;width:14px;height:14px;border:2px solid #8d8d8d;border-radius:2px;background:#fff"></div><svg class="a" style="left:238px;top:517px" width="12" height="10" viewBox="0 0 12 10"><path d="M1 5 L4.5 8.5 L11 1.5" stroke="#e6e6e6" fill="none" stroke-width="1.1"/></svg>
<div class="t" style="left:280px;top:513.0px;font-size:12.96px;font-weight:400;color:#242424;">2024-1209</div>
<div class="a" style="left:394px;top:519.5px;width:7px;height:7px;border-radius:50%;background:#3d85f0"></div>
<div class="t" style="left:418px;top:513.0px;font-size:13.65px;font-weight:400;color:#3268b2;">Connect TPG ProjectPowerPack to TP...</div>
<div class="t" style="right:1146px;top:513.0px;font-size:12.9px;font-weight:400;color:#242424;">0%</div>
<div class="t" style="left:779.3px;top:513.0px;font-size:12.89px;font-weight:400;color:#242424;">04/07/2024</div>
<div class="t" style="left:879.7px;top:513.0px;font-size:12.89px;font-weight:400;color:#242424;">05/03/2024</div>
<div class="t" style="left:984.3px;top:513.0px;font-size:13.42px;font-weight:400;color:#242424;width:92px;overflow:hidden">In Wartestellung</div>
<svg class="a" style="left:1084px;top:515px" width="14" height="14" viewBox="0 0 14 14"><circle cx="7" cy="7" r="7" fill="#3c7a1e"/><path d="M3.8 7.2 L6 9.3 L10.2 4.9" stroke="#fff" fill="none" stroke-width="1.5"/></svg>
<div class="t" style="left:1102px;top:513.0px;font-size:13.04px;font-weight:400;color:#242424;">Grün</div>
<div class="a" style="left:216px;top:544px;width:955px;height:2px;background:#e9e9e9"></div>
<div class="a" style="left:235px;top:559px;width:14px;height:14px;border:2px solid #8d8d8d;border-radius:2px;background:#fff"></div><svg class="a" style="left:238px;top:563px" width="12" height="10" viewBox="0 0 12 10"><path d="M1 5 L4.5 8.5 L11 1.5" stroke="#e6e6e6" fill="none" stroke-width="1.1"/></svg>
<div class="t" style="left:280px;top:559.0px;font-size:12.96px;font-weight:400;color:#242424;">2025-1325</div>
<div class="a" style="left:394px;top:565.5px;width:7px;height:7px;border-radius:50%;background:#3d85f0"></div>
<div class="t" style="left:418px;top:559.0px;font-size:13.65px;font-weight:400;color:#3268b2;">Consolidate PPP environments</div>
<div class="t" style="right:1146px;top:559.0px;font-size:12.9px;font-weight:400;color:#242424;">38%</div>
<div class="t" style="left:779.3px;top:559.0px;font-size:12.89px;font-weight:400;color:#242424;">01/01/2025</div>
<div class="t" style="left:879.7px;top:559.0px;font-size:12.89px;font-weight:400;color:#242424;">02/17/2025</div>
<div class="t" style="left:984.3px;top:559.0px;font-size:13.42px;font-weight:400;color:#242424;width:92px;overflow:hidden">Projekt erstellt</div>
<svg class="a" style="left:1084px;top:561px" width="14" height="14" viewBox="0 0 14 14"><circle cx="7" cy="7" r="7" fill="#3c7a1e"/><path d="M3.8 7.2 L6 9.3 L10.2 4.9" stroke="#fff" fill="none" stroke-width="1.5"/></svg>
<div class="t" style="left:1102px;top:559.0px;font-size:13.04px;font-weight:400;color:#242424;">Grün</div>
<div class="a" style="left:216px;top:590px;width:955px;height:2px;background:#e9e9e9"></div>
<div class="a" style="left:235px;top:605px;width:14px;height:14px;border:2px solid #8d8d8d;border-radius:2px;background:#fff"></div><svg class="a" style="left:238px;top:609px" width="12" height="10" viewBox="0 0 12 10"><path d="M1 5 L4.5 8.5 L11 1.5" stroke="#e6e6e6" fill="none" stroke-width="1.1"/></svg>
<div class="t" style="left:280px;top:605.0px;font-size:12.96px;font-weight:400;color:#242424;">2024-1203</div>
<div class="a" style="left:394px;top:611.5px;width:7px;height:7px;border-radius:50%;background:#3d85f0"></div>
<div class="t" style="left:418px;top:605.0px;font-size:13.65px;font-weight:400;color:#3268b2;">Consulting Linienprojekt</div>
<div class="t" style="right:1146px;top:605.0px;font-size:12.9px;font-weight:400;color:#242424;">0%</div>
<div class="t" style="left:779.3px;top:605.0px;font-size:12.89px;font-weight:400;color:#242424;">01/01/2024</div>
<div class="t" style="left:879.7px;top:605.0px;font-size:12.89px;font-weight:400;color:#242424;">02/15/2024</div>
<div class="t" style="left:984.3px;top:605.0px;font-size:13.42px;font-weight:400;color:#242424;width:92px;overflow:hidden">Aktiv</div>
<svg class="a" style="left:1084px;top:607px" width="14" height="14" viewBox="0 0 14 14"><circle cx="7" cy="7" r="7" fill="#f3e013"/><path d="M7 3.6 V8" stroke="#fff" stroke-width="1.3"/><circle cx="7" cy="10.2" r="0.8" fill="#fff"/></svg>
<div class="t" style="left:1102px;top:605.0px;font-size:13.04px;font-weight:400;color:#242424;">Gelb</div>
<div class="a" style="left:216px;top:636px;width:955px;height:2px;background:#e9e9e9"></div>
<div class="a" style="left:235px;top:651px;width:14px;height:14px;border:2px solid #8d8d8d;border-radius:2px;background:#fff"></div><svg class="a" style="left:238px;top:655px" width="12" height="10" viewBox="0 0 12 10"><path d="M1 5 L4.5 8.5 L11 1.5" stroke="#e6e6e6" fill="none" stroke-width="1.1"/></svg>
<div class="t" style="left:280px;top:651.0px;font-size:12.96px;font-weight:400;color:#242424;">2025-1356</div>
<div class="a" style="left:394px;top:657.5px;width:7px;height:7px;border-radius:50%;background:#3d85f0"></div>
<div class="t" style="left:418px;top:651.0px;font-size:13.65px;font-weight:400;color:#3268b2;">Development Linienprojekt</div>
<div class="t" style="right:1146px;top:651.0px;font-size:12.9px;font-weight:400;color:#242424;">0%</div>
<div class="t" style="left:779.3px;top:651.0px;font-size:12.89px;font-weight:400;color:#242424;">01/01/2025</div>
<div class="t" style="left:879.7px;top:651.0px;font-size:12.89px;font-weight:400;color:#242424;">04/18/2025</div>
<div class="t" style="left:984.3px;top:651.0px;font-size:13.42px;font-weight:400;color:#242424;width:92px;overflow:hidden">Projekt erstellt</div>
<svg class="a" style="left:1084px;top:653px" width="14" height="14" viewBox="0 0 14 14"><circle cx="7" cy="7" r="7" fill="#3c7a1e"/><path d="M3.8 7.2 L6 9.3 L10.2 4.9" stroke="#fff" fill="none" stroke-width="1.5"/></svg>
<div class="t" style="left:1102px;top:651.0px;font-size:13.04px;font-weight:400;color:#242424;">Grün</div>
<div class="a" style="left:216px;top:682px;width:955px;height:2px;background:#e9e9e9"></div>
<div class="a" style="left:235px;top:697px;width:14px;height:14px;border:2px solid #8d8d8d;border-radius:2px;background:#fff"></div><svg class="a" style="left:238px;top:701px" width="12" height="10" viewBox="0 0 12 10"><path d="M1 5 L4.5 8.5 L11 1.5" stroke="#e6e6e6" fill="none" stroke-width="1.1"/></svg>
<div class="t" style="left:280px;top:697.0px;font-size:12.96px;font-weight:400;color:#242424;">2025-1362</div>
<div class="a" style="left:394px;top:703.5px;width:7px;height:7px;border-radius:50%;background:#3d85f0"></div>
<div class="t" style="left:418px;top:697.0px;font-size:13.65px;font-weight:400;color:#3268b2;">ERP Migration</div>
<div class="t" style="right:1146px;top:697.0px;font-size:12.9px;font-weight:400;color:#242424;">43%</div>
<div class="t" style="left:779.3px;top:697.0px;font-size:12.89px;font-weight:400;color:#242424;">03/01/2024</div>
<div class="t" style="left:879.7px;top:697.0px;font-size:12.89px;font-weight:400;color:#242424;">06/14/2024</div>
<div class="t" style="left:984.3px;top:697.0px;font-size:13.42px;font-weight:400;color:#242424;width:92px;overflow:hidden">Aktiv</div>
<svg class="a" style="left:1084px;top:699px" width="14" height="14" viewBox="0 0 14 14"><circle cx="7" cy="7" r="7" fill="#3c7a1e"/><path d="M3.8 7.2 L6 9.3 L10.2 4.9" stroke="#fff" fill="none" stroke-width="1.5"/></svg>
<div class="t" style="left:1102px;top:697.0px;font-size:13.04px;font-weight:400;color:#242424;">Grün</div>
<div class="a" style="left:216px;top:728px;width:955px;height:2px;background:#e9e9e9"></div>
<div class="a" style="left:235px;top:743px;width:14px;height:14px;border:2px solid #8d8d8d;border-radius:2px;background:#fff"></div><svg class="a" style="left:238px;top:747px" width="12" height="10" viewBox="0 0 12 10"><path d="M1 5 L4.5 8.5 L11 1.5" stroke="#e6e6e6" fill="none" stroke-width="1.1"/></svg>
<div class="t" style="left:280px;top:743.0px;font-size:12.96px;font-weight:400;color:#242424;">2024-1313</div>
<div class="a" style="left:394px;top:749.5px;width:7px;height:7px;border-radius:50%;background:#3d85f0"></div>
<div class="t" style="left:418px;top:743.0px;font-size:13.65px;font-weight:400;color:#3268b2;">Effort calculation project</div>
<div class="t" style="right:1146px;top:743.0px;font-size:12.9px;font-weight:400;color:#242424;">0%</div>
<div class="t" style="left:779.3px;top:743.0px;font-size:12.89px;font-weight:400;color:#242424;">12/18/2024</div>
<div class="t" style="left:879.7px;top:743.0px;font-size:12.89px;font-weight:400;color:#242424;">05/06/2025</div>
<div class="t" style="left:984.3px;top:743.0px;font-size:13.42px;font-weight:400;color:#242424;width:92px;overflow:hidden">Aktiv</div>
<svg class="a" style="left:1084px;top:745px" width="14" height="14" viewBox="0 0 14 14"><circle cx="7" cy="7" r="7" fill="#3c7a1e"/><path d="M3.8 7.2 L6 9.3 L10.2 4.9" stroke="#fff" fill="none" stroke-width="1.5"/></svg>
<div class="t" style="left:1102px;top:743.0px;font-size:13.04px;font-weight:400;color:#242424;">Grün</div>
<div class="a" style="left:216px;top:774px;width:955px;height:2px;background:#e9e9e9"></div>
<div class="a" style="left:235px;top:789px;width:14px;height:14px;border:2px solid #8d8d8d;border-radius:2px;background:#fff"></div><svg class="a" style="left:238px;top:793px" width="12" height="10" viewBox="0 0 12 10"><path d="M1 5 L4.5 8.5 L11 1.5" stroke="#e6e6e6" fill="none" stroke-width="1.1"/></svg>
<div class="t" style="left:280px;top:789.0px;font-size:12.96px;font-weight:400;color:#242424;">2025-1357</div>
<div class="a" style="left:394px;top:795.5px;width:7px;height:7px;border-radius:50%;background:#3d85f0"></div>
<div class="t" style="left:418px;top:789.0px;font-size:13.65px;font-weight:400;color:#3268b2;">Einführung neue PPM Lösung 2025</div>
<div class="t" style="right:1146px;top:789.0px;font-size:12.9px;font-weight:400;color:#242424;">0%</div>
<div class="t" style="left:779.3px;top:789.0px;font-size:12.89px;font-weight:400;color:#242424;">01/01/2025</div>
<div class="t" style="left:879.7px;top:789.0px;font-size:12.89px;font-weight:400;color:#242424;">03/11/2025</div>
<div class="t" style="left:984.3px;top:789.0px;font-size:13.42px;font-weight:400;color:#242424;width:92px;overflow:hidden">Projekt erstellt</div>
<svg class="a" style="left:1084px;top:791px" width="14" height="14" viewBox="0 0 14 14"><circle cx="7" cy="7" r="7" fill="#3c7a1e"/><path d="M3.8 7.2 L6 9.3 L10.2 4.9" stroke="#fff" fill="none" stroke-width="1.5"/></svg>
<div class="t" style="left:1102px;top:789.0px;font-size:13.04px;font-weight:400;color:#242424;">Grün</div>
<div class="a" style="left:216px;top:820px;width:955px;height:2px;background:#e9e9e9"></div>
<div class="a" style="left:235px;top:835px;width:14px;height:14px;border:2px solid #8d8d8d;border-radius:2px;background:#fff"></div><svg class="a" style="left:238px;top:839px" width="12" height="10" viewBox="0 0 12 10"><path d="M1 5 L4.5 8.5 L11 1.5" stroke="#e6e6e6" fill="none" stroke-width="1.1"/></svg>
<div class="t" style="left:280px;top:835.0px;font-size:12.96px;font-weight:400;color:#242424;">2025-1322</div>
<div class="a" style="left:394px;top:841.5px;width:7px;height:7px;border-radius:50%;background:#3d85f0"></div>
<div class="t" style="left:418px;top:835.0px;font-size:13.65px;font-weight:400;color:#3268b2;">Entwicklung eines neuen Jammers</div>
<div class="t" style="right:1146px;top:835.0px;font-size:12.9px;font-weight:400;color:#242424;">12%</div>
<div class="t" style="left:779.3px;top:835.0px;font-size:12.89px;font-weight:400;color:#242424;">03/01/2025</div>
<div class="t" style="left:879.7px;top:835.0px;font-size:12.89px;font-weight:400;color:#242424;">12/19/2025</div>
<div class="t" style="left:984.3px;top:835.0px;font-size:13.42px;font-weight:400;color:#242424;width:92px;overflow:hidden">Aktiv</div>
<svg class="a" style="left:1084px;top:837px" width="14" height="14" viewBox="0 0 14 14"><circle cx="7" cy="7" r="7" fill="#3c7a1e"/><path d="M3.8 7.2 L6 9.3 L10.2 4.9" stroke="#fff" fill="none" stroke-width="1.5"/></svg>
<div class="t" style="left:1102px;top:835.0px;font-size:13.04px;font-weight:400;color:#242424;">Grün</div>
<div class="a" style="left:216px;top:866px;width:955px;height:2px;background:#e9e9e9"></div>
<div class="a" style="left:235px;top:881px;width:14px;height:14px;border:2px solid #8d8d8d;border-radius:2px;background:#fff"></div><svg class="a" style="left:238px;top:885px" width="12" height="10" viewBox="0 0 12 10"><path d="M1 5 L4.5 8.5 L11 1.5" stroke="#e6e6e6" fill="none" stroke-width="1.1"/></svg>
<div class="t" style="left:280px;top:881.0px;font-size:12.96px;font-weight:400;color:#242424;">2024-1206</div>
<div class="a" style="left:394px;top:887.5px;width:7px;height:7px;border-radius:50%;background:#3d85f0"></div>
<div class="t" style="left:418px;top:881.0px;font-size:13.65px;font-weight:400;color:#3268b2;">Finance reporting project</div>
<div class="t" style="right:1146px;top:881.0px;font-size:12.9px;font-weight:400;color:#242424;">32%</div>
<div class="t" style="left:779.3px;top:881.0px;font-size:12.89px;font-weight:400;color:#242424;">01/18/2024</div>
<div class="t" style="left:879.7px;top:881.0px;font-size:12.89px;font-weight:400;color:#242424;">02/20/2024</div>
<div class="t" style="left:984.3px;top:881.0px;font-size:13.42px;font-weight:400;color:#242424;width:92px;overflow:hidden">Projekt erstellt</div>
<svg class="a" style="left:1084px;top:883px" width="14" height="14" viewBox="0 0 14 14"><circle cx="7" cy="7" r="7" fill="#3c7a1e"/><path d="M3.8 7.2 L6 9.3 L10.2 4.9" stroke="#fff" fill="none" stroke-width="1.5"/></svg>
<div class="t" style="left:1102px;top:881.0px;font-size:13.04px;font-weight:400;color:#242424;">Grün</div>
<div class="a" style="left:216px;top:912px;width:955px;height:2px;background:#e9e9e9"></div>
<div class="a" style="left:235px;top:927px;width:14px;height:14px;border:2px solid #8d8d8d;border-radius:2px;background:#fff"></div><svg class="a" style="left:238px;top:931px" width="12" height="10" viewBox="0 0 12 10"><path d="M1 5 L4.5 8.5 L11 1.5" stroke="#e6e6e6" fill="none" stroke-width="1.1"/></svg>
<div class="t" style="left:280px;top:927.0px;font-size:12.96px;font-weight:400;color:#242424;">2023-1132</div>
<div class="a" style="left:394px;top:933.5px;width:7px;height:7px;border-radius:50%;background:#3d85f0"></div>
<div class="t" style="left:418px;top:927.0px;font-size:13.65px;font-weight:400;color:#3268b2;">Find the Pick of Destiny</div>
<div class="t" style="right:1146px;top:927.0px;font-size:12.9px;font-weight:400;color:#242424;">14%</div>
<div class="t" style="left:779.3px;top:927.0px;font-size:12.89px;font-weight:400;color:#242424;">09/24/2023</div>
<div class="t" style="left:879.7px;top:927.0px;font-size:12.89px;font-weight:400;color:#242424;">10/03/2023</div>
<div class="t" style="left:984.3px;top:927.0px;font-size:13.42px;font-weight:400;color:#242424;width:92px;overflow:hidden">Projekt erstellt</div>
<svg class="a" style="left:1084px;top:929px" width="14" height="14" viewBox="0 0 14 14"><circle cx="7" cy="7" r="7" fill="#3c7a1e"/><path d="M3.8 7.2 L6 9.3 L10.2 4.9" stroke="#fff" fill="none" stroke-width="1.5"/></svg>
<div class="t" style="left:1102px;top:927.0px;font-size:13.04px;font-weight:400;color:#242424;">Grün</div>
<div class="a" style="left:216px;top:958px;width:955px;height:2px;background:#e9e9e9"></div>
<div class="a" style="left:235px;top:973px;width:14px;height:14px;border:2px solid #8d8d8d;border-radius:2px;background:#fff"></div><svg class="a" style="left:238px;top:977px" width="12" height="10" viewBox="0 0 12 10"><path d="M1 5 L4.5 8.5 L11 1.5" stroke="#e6e6e6" fill="none" stroke-width="1.1"/></svg>
<div class="t" style="left:280px;top:973.0px;font-size:12.96px;font-weight:400;color:#242424;">2023-1114</div>
<div class="a" style="left:394px;top:979.5px;width:7px;height:7px;border-radius:50%;background:#3d85f0"></div>
<div class="t" style="left:418px;top:973.0px;font-size:13.65px;font-weight:400;color:#3268b2;">Import Schedules from mpp files</div>
<div class="t" style="right:1146px;top:973.0px;font-size:12.9px;font-weight:400;color:#242424;">100%</div>
<div class="t" style="left:779.3px;top:973.0px;font-size:12.89px;font-weight:400;color:#242424;">06/07/2022</div>
<div class="t" style="left:879.7px;top:973.0px;font-size:12.89px;font-weight:400;color:#242424;">06/28/2022</div>
<div class="t" style="left:984.3px;top:973.0px;font-size:13.42px;font-weight:400;color:#242424;width:92px;overflow:hidden">Abgeschlossen</div>
<svg class="a" style="left:1084px;top:975px" width="14" height="14" viewBox="0 0 14 14"><circle cx="7" cy="7" r="7" fill="#3c7a1e"/><path d="M3.8 7.2 L6 9.3 L10.2 4.9" stroke="#fff" fill="none" stroke-width="1.5"/></svg>
<div class="t" style="left:1102px;top:973.0px;font-size:13.04px;font-weight:400;color:#242424;">Grün</div>
<div class="a" style="left:216px;top:1004px;width:955px;height:2px;background:#e9e9e9"></div>
<div class="a" style="left:1171px;top:213px;width:7px;height:809px;background:#e9e9e9"></div>
<div class="a" style="left:1178px;top:213px;width:697px;height:793px;overflow:hidden" id="g">
<div class="a" style="left:58.5px;top:57px;width:2px;height:736px;background:#f4f4f4"></div>
<div class="a" style="left:168.4000000000001px;top:57px;width:2px;height:736px;background:#f4f4f4"></div>
<div class="a" style="left:278px;top:57px;width:2px;height:736px;background:#f4f4f4"></div>
<div class="a" style="left:387.70000000000005px;top:57px;width:2px;height:736px;background:#f4f4f4"></div>
<div class="a" style="left:497.5999999999999px;top:57px;width:2px;height:736px;background:#f4f4f4"></div>
<div class="a" style="left:607.5999999999999px;top:57px;width:2px;height:736px;background:#f4f4f4"></div>
<div class="a" style="left:0;top:101px;width:698px;height:2px;background:#e9e9e9"></div>
<div class="a" style="left:0;top:147px;width:698px;height:2px;background:#e9e9e9"></div>
<div class="a" style="left:0;top:193px;width:698px;height:2px;background:#e9e9e9"></div>
<div class="a" style="left:0;top:239px;width:698px;height:2px;background:#e9e9e9"></div>
<div class="a" style="left:0;top:285px;width:698px;height:2px;background:#e9e9e9"></div>
<div class="a" style="left:0;top:331px;width:698px;height:2px;background:#e9e9e9"></div>
<div class="a" style="left:0;top:377px;width:698px;height:2px;background:#e9e9e9"></div>
<div class="a" style="left:0;top:423px;width:698px;height:2px;background:#e9e9e9"></div>
<div class="a" style="left:0;top:469px;width:698px;height:2px;background:#e9e9e9"></div>
<div class="a" style="left:0;top:515px;width:698px;height:2px;background:#e9e9e9"></div>
<div class="a" style="left:0;top:561px;width:698px;height:2px;background:#e9e9e9"></div>
<div class="a" style="left:0;top:607px;width:698px;height:2px;background:#e9e9e9"></div>
<div class="a" style="left:0;top:653px;width:698px;height:2px;background:#e9e9e9"></div>
<div class="a" style="left:0;top:699px;width:698px;height:2px;background:#e9e9e9"></div>
<div class="a" style="left:0;top:745px;width:698px;height:2px;background:#e9e9e9"></div>
<div class="a" style="left:0;top:791px;width:698px;height:2px;background:#e9e9e9"></div>
<div class="a" style="left:0px;top:67px;width:562px;height:25px;background:#a6d9a5"></div>
<div class="a" style="left:0px;top:67px;width:101px;height:25px;background:#8cb88d"></div>
<div class="a" style="left:0px;top:113px;width:226px;height:25px;background:#a6d9a5"></div>
<div class="a" style="left:0px;top:159px;width:46px;height:25px;background:#a6d9a5"></div>
<div class="a" style="left:0px;top:205px;width:697px;height:25px;background:#a6d9a5"></div>
<div class="a" style="left:0px;top:205px;width:697px;height:25px;background:#8cb88d"></div>
<div class="a" style="left:0px;top:251px;width:183px;height:25px;background:#a6d9a5"></div>
<div class="a" style="left:0px;top:343px;width:14px;height:25px;background:#a6d9a5"></div>
<div class="a" style="left:0px;top:435px;width:234px;height:25px;background:#a6d9a5"></div>
<div class="a" style="left:0px;top:527px;width:299px;height:25px;background:#a6d9a5"></div>
<div class="a" style="left:0px;top:573px;width:97px;height:25px;background:#a6d9a5"></div>
<div class="a" style="left:60px;top:619px;width:637px;height:25px;background:#a6d9a5"></div>
<div class="a" style="left:60px;top:619px;width:126px;height:25px;background:#8cb88d"></div>
<div class="a" style="left:0;top:0;width:698px;height:57px;background:#fff"></div>
<div class="a" style="left:0;top:57px;width:698px;height:1px;background:#ececec"></div>
<div class="a" style="left:0;top:58px;width:698px;height:3px;background:linear-gradient(rgba(0,0,0,0.04),rgba(0,0,0,0))"></div>
<div class="t" style="left:398.5999999999999px;width:200px;text-align:center;top:4px;font-size:13.49px;font-weight:700;color:#404040">2025</div>
<div class="t" style="left:-82.40000000000009px;width:200px;text-align:center;top:33px;font-size:13.5px;font-weight:700;color:#242424">2025</div>
<div class="t" style="left:14.450000000000045px;width:200px;text-align:center;top:33px;font-size:13.5px;font-weight:700;color:#242424">Mar 2025</div>
<div class="t" style="left:124.20000000000005px;width:200px;text-align:center;top:33px;font-size:13.5px;font-weight:700;color:#242424">Apr 2025</div>
<div class="t" style="left:233.8499999999999px;width:200px;text-align:center;top:33px;font-size:13.5px;font-weight:700;color:#242424">May 2025</div>
<div class="t" style="left:343.6500000000001px;width:200px;text-align:center;top:33px;font-size:13.5px;font-weight:700;color:#242424">Jun 2025</div>
<div class="t" style="left:453.5999999999999px;width:200px;text-align:center;top:33px;font-size:13.5px;font-weight:700;color:#242424">Jul 2025</div>
<div class="t" style="left:563.55px;width:200px;text-align:center;top:33px;font-size:13.5px;font-weight:700;color:#242424">Aug 2025</div>
<div class="a" style="left:273px;top:29px;width:2px;height:764px;background:#ee3a44"></div>
<div class="a" style="left:273px;top:29px;width:44px;height:28px;background:#f24d56;border-radius:2px 6px 6px 0"></div>
<div class="t" style="left:274px;width:43px;text-align:center;top:33px;font-size:10.6px;font-weight:700;color:#fff">Today</div>
</div>
<div class="a" style="left:1875px;top:213px;width:1px;height:58px;background:#e6e6e6"></div>
<div class="a" style="left:1875px;top:1006px;width:1px;height:16px;background:#e6e6e6"></div>
<div class="a" style="left:1881px;top:276px;width:6px;height:325px;background:#b8b8b8;border-radius:3px"></div>
<div class="a" style="left:223px;top:1014px;width:756px;height:6px;background:#b8b8b8;border-radius:3px"></div>
<div class="a" style="left:1435px;top:1014px;width:32px;height:6px;background:#b8b8b8;border-radius:3px"></div>
</div></body></html>
